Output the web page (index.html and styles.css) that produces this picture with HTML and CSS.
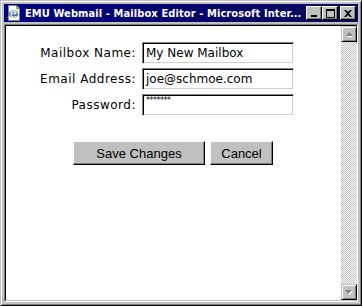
FILE: index.html
```html
<!DOCTYPE html>
<html>
<head>
<meta charset="utf-8">
<link rel="stylesheet" href="styles.css">
</head>
<body>
<div class="window">
  <div class="titlebar">
    <svg class="app-icon" width="16" height="16" viewBox="0 0 16 16">
      <path d="M2.5 0.5h8l3 3v12h-11z" fill="#fff" stroke="#808080"/>
      <path d="M10.5 0.5v3h3" fill="#c0c0c0" stroke="#808080"/>
      <ellipse cx="7.5" cy="9" rx="4.5" ry="4" fill="#2a6fd8"/>
      <path d="M4.6 8.6h5.6M5 8.6c0-1.8 1-2.8 2.6-2.8s2.5 1 2.5 2.8M10 11c-0.6 1-1.4 1.4-2.4 1.4-1.8 0-2.8-1.3-2.8-3" fill="none" stroke="#fff" stroke-width="1.2"/>
      <path d="M1.5 12.5c2-1 7-5 11-8" fill="none" stroke="#f0c020" stroke-width="1"/>
    </svg>
    <span class="title-text">EMU Webmail - Mailbox Editor - Microsoft Inter...</span>
    <div class="title-buttons">
      <div class="tbtn"><svg width="8" height="7" viewBox="0 0 8 7"><rect x="1" y="5" width="6" height="2" fill="#000"/></svg></div>
      <div class="tbtn"><svg width="9" height="9" viewBox="0 0 9 9"><path d="M0.5 0.5h8v8h-8z" fill="none" stroke="#000"/><rect x="0" y="0" width="9" height="2" fill="#000"/></svg></div>
      <div class="tbtn close"><svg width="8" height="7" viewBox="0 0 8 7"><path d="M0 0h2l2 2 2-2h2l-3 3.5 3 3.5h-2l-2-2-2 2h-2l3-3.5z" fill="#000"/></svg></div>
    </div>
  </div>
  <div class="client">
    <div class="client-inner">
      <div class="page">
        <div class="form">
          <label class="label">Mailbox Name:</label>
          <div class="field">My New Mailbox</div>
          <label class="label">Email Address:</label>
          <div class="field">joe@schmoe.com</div>
          <label class="label">Password:</label>
          <div class="field pw">*******</div>
        </div>
        <div class="actions">
          <div class="btn save">Save Changes</div>
          <div class="btn cancel">Cancel</div>
        </div>
      </div>
      <div class="scrollbar">
        <div class="sbtn"><svg width="7" height="5" viewBox="0 0 7 5"><path d="M4 1l3.5 4h-7z" fill="#fff"/><path d="M3.5 0l3.5 4h-7z" fill="#808080"/></svg></div>
        <div class="track"></div>
        <div class="sbtn"><svg width="8" height="5" viewBox="0 0 8 5"><path d="M1 1h7l-3.5 4z" fill="#fff"/><path d="M0 0h7l-3.5 4z" fill="#808080"/></svg></div>
      </div>
    </div>
  </div>
</div>
</body>
</html>
```
FILE: styles.css
```css
html, body {
  margin: 0;
  padding: 0;
  background: #c0c0c0;
}

.window {
  width: 362px;
  height: 306px;
  box-sizing: border-box;
  background: #c0c0c0;
  border: 1px solid;
  border-color: #c0c0c0 #000 #000 #c0c0c0;
  box-shadow: inset 1px 1px #fff, inset -1px -1px #808080;
  padding: 3px;
  display: flex;
  flex-direction: column;
}

.titlebar {
  height: 18px;
  flex: none;
  background: linear-gradient(90deg, #000080, #0a0a5a);
  display: flex;
  align-items: center;
  margin-bottom: 2px;
  padding-left: 2px;
}

.app-icon {
  flex: none;
  margin-right: 3px;
}

.title-text {
  flex: 1;
  color: #fff;
  font-family: "DejaVu Sans Condensed", "Liberation Sans", sans-serif;
  font-stretch: condensed;
  font-weight: bold;
  font-size: 11px;
  letter-spacing: 0.1px;
  white-space: nowrap;
  overflow: hidden;
}

.title-buttons {
  display: flex;
  flex: none;
  margin-right: 2px;
}

.tbtn {
  width: 16px;
  height: 14px;
  box-sizing: border-box;
  background: #c0c0c0;
  border: 1px solid;
  border-color: #fff #000 #000 #fff;
  box-shadow: inset -1px -1px #808080;
  display: flex;
  align-items: center;
  justify-content: center;
}

.tbtn.close {
  margin-left: 2px;
}

.client {
  flex: 1;
  display: flex;
  border: 1px solid;
  border-color: #808080 #fff #fff #808080;
}

.client-inner {
  flex: 1;
  display: flex;
  border: 1px solid;
  border-color: #000 #c0c0c0 #c0c0c0 #000;
  border-right-width: 0;
  background: #fff;
}

.page {
  flex: 1;
  background: #fff;
  padding-top: 16px;
}

.form {
  display: grid;
  grid-template-columns: 130px 152px;
  column-gap: 6px;
  row-gap: 4px;
}

.label {
  font-family: "DejaVu Sans", Verdana, sans-serif;
  font-size: 12px;
  letter-spacing: 0.5px;
  color: #000;
  text-align: right;
  align-self: center;
}

.field {
  height: 22px;
  box-sizing: border-box;
  border: 1px solid;
  border-color: #808080 #fff #fff #808080;
  box-shadow: inset 1px 1px #000, inset -1px -1px #d4d0c8;
  padding: 1px 3px 0 3px;
  font-family: "DejaVu Sans", Verdana, sans-serif;
  font-size: 12px;
  line-height: 18px;
  color: #000;
  white-space: nowrap;
  overflow: hidden;
}

.field.pw {
  font-size: 8px;
  line-height: 9px;
  letter-spacing: -0.5px;
}

.actions {
  display: flex;
  gap: 5px;
  margin-top: 25px;
  padding-left: 67px;
}

.btn {
  height: 24px;
  box-sizing: border-box;
  background: #c0c0c0;
  border: 1px solid;
  border-color: #fff #000 #000 #fff;
  box-shadow: inset -1px -1px #808080;
  font-family: "Liberation Sans", Arial, sans-serif;
  font-size: 13px;
  color: #000;
  display: flex;
  align-items: center;
  justify-content: center;
}

.btn.save {
  width: 132px;
}

.btn.cancel {
  width: 63px;
}

.scrollbar {
  width: 16px;
  flex: none;
  display: flex;
  flex-direction: column;
}

.sbtn {
  width: 16px;
  height: 16px;
  box-sizing: border-box;
  flex: none;
  background: #c0c0c0;
  border: 1px solid;
  border-color: #c0c0c0 #000 #000 #c0c0c0;
  box-shadow: inset 1px 1px #fff, inset -1px -1px #808080;
  display: flex;
  align-items: center;
  justify-content: center;
}

.track {
  flex: 1;
  background-color: #fff;
  background-image: conic-gradient(#c0c0c0 25%, #fff 0 50%, #c0c0c0 0 75%, #fff 0);
  background-size: 2px 2px;
}
```
